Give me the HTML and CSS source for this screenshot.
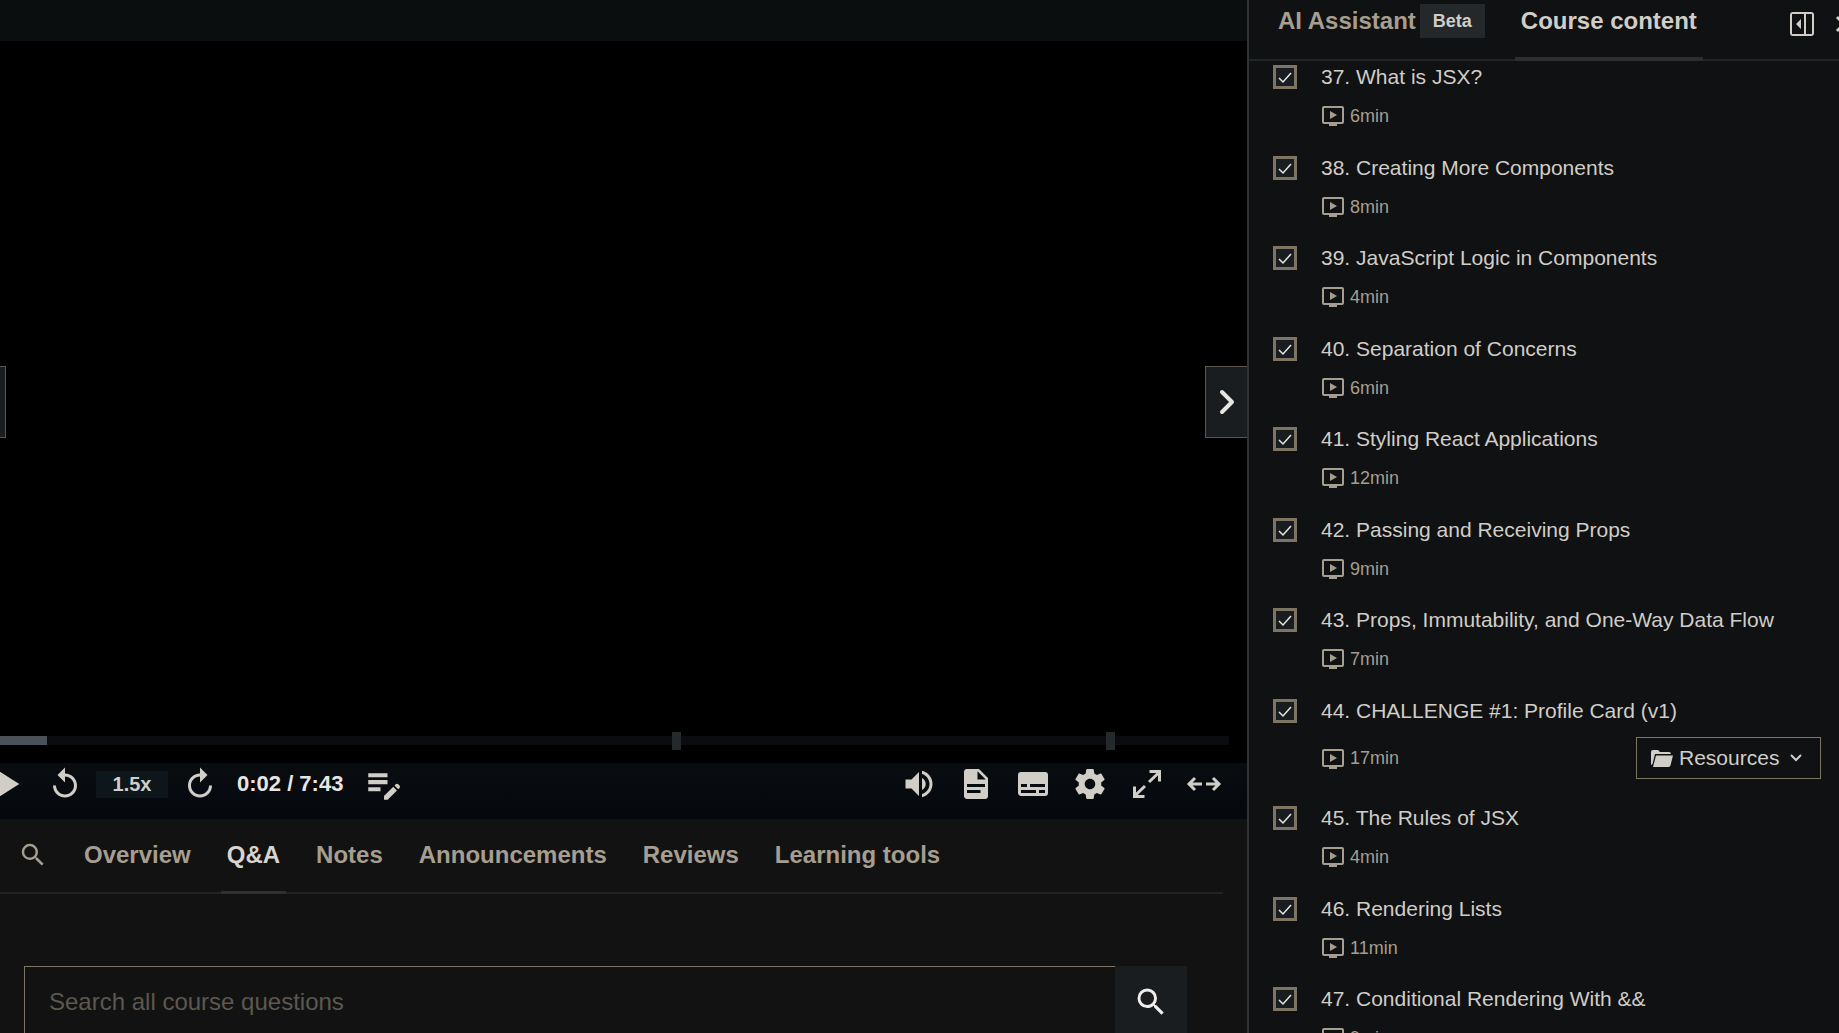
FILE: index.html
```html
<!DOCTYPE html>
<html lang="en">
<head>
<meta charset="utf-8">
<title>Course player</title>
<link rel="stylesheet" href="styles.css">
</head>
<body>
<svg class="sprite" aria-hidden="true">
  <symbol id="i-lecture" viewBox="0 0 22 20"><path fill-rule="evenodd" d="M2 0h18a2 2 0 0 1 2 2v14a2 2 0 0 1-2 2h-5v2H7v-2H2a2 2 0 0 1-2-2V2a2 2 0 0 1 2-2zm0 2v14h18V2zm6 3l7 4-7 4z"/></symbol>
  <symbol id="i-search" viewBox="0 0 24 24"><path d="M15.5 14h-.79l-.28-.27A6.47 6.47 0 0 0 16 9.5 6.5 6.5 0 1 0 9.5 16c1.61 0 3.09-.59 4.23-1.57l.27.28v.79l5 4.99L20.49 19l-4.99-5zm-6 0C7.01 14 5 11.99 5 9.5S7.01 5 9.5 5 14 7.01 14 9.5 11.99 14 9.5 14z"/></symbol>
  <symbol id="i-replay" viewBox="0 0 24 24"><path d="M12 5V1L7 6l5 5V7c3.31 0 6 2.69 6 6s-2.69 6-6 6-6-2.69-6-6H4c0 4.42 3.58 8 8 8s8-3.58 8-8-3.58-8-8-8z"/></symbol>
</svg>
<div class="app">
  <main class="main">
    <div class="topbar"></div>
    <section class="video" aria-label="Video player">
      <button class="side-nav side-nav-prev" aria-label="Previous lecture"></button>
      <button class="side-nav side-nav-next" aria-label="Next lecture">
        <svg class="chevron" viewBox="0 0 16 26"><path d="M3 3l10 10L3 23"/></svg>
      </button>
      <div class="progress">
        <div class="played"></div>
        <span class="marker" style="left:54.7%"></span>
        <span class="marker" style="left:90%"></span>
      </div>
    </section>
    <div class="controls">
      <button class="ctl play" aria-label="Play"><svg class="icon-lg" viewBox="0 0 24 24"><path d="M8 5v14l11-7z"/></svg></button>
      <button class="ctl" aria-label="Rewind"><svg class="icon"><use href="#i-replay"/></svg></button>
      <button class="speed">1.5x</button>
      <button class="ctl" aria-label="Forward"><svg class="icon flip"><use href="#i-replay"/></svg></button>
      <span class="time">0:02 / 7:43</span>
      <button class="ctl" aria-label="Add note"><svg class="icon-lg" viewBox="0 0 24 24"><path d="M3 9.700h11v2.400H3zM3 8.200h11V5.800H3zM3 16.200h7v-2.400H3zM18.010 12.870l.71-.71c.39-.39 1.020-.39 1.410 0l.71.71c.39.39.39 1.020 0 1.410l-.71.71-2.120-2.120zm-.71.71-5.300 5.300V21h2.120l5.300-5.300-2.120-2.120z"/></svg></button>
      <div class="controls-right">
        <button class="ctl" aria-label="Volume"><svg class="icon" viewBox="0 0 24 24"><path d="M3 9v6h4l5 5V4L7 9H3zm11-1v8c1.480-.730 2.500-2.250 2.500-4S15.480 8.740 14 8zM14 3.230v2.060c2.890.860 5 3.540 5 6.710s-2.110 5.850-5 6.710v2.060c4.010-.910 7-4.490 7-8.770s-2.990-7.860-7-8.770z"/></svg></button>
        <button class="ctl" aria-label="Transcript"><svg class="icon" viewBox="0 0 24 24"><path fill-rule="evenodd" d="M14 2H6a2 2 0 0 0-2 2v16c0 1.100.9 2 2 2h12a2 2 0 0 0 2-2V8zm-1 1.500L18.500 9H13zM6 12h12v2H6zm0 4h9v2H6z"/></svg></button>
        <button class="ctl" aria-label="Captions"><svg class="icon" viewBox="0 0 24 24"><path fill-rule="evenodd" d="M20 4H4a2 2 0 0 0-2 2v12c0 1.100.9 2 2 2h16a2 2 0 0 0 2-2V6a2 2 0 0 0-2-2zM4 12h4v2H4zm10 6H4v-2h10zm6 0h-4v-2h4zm0-4H10v-2h10z"/></svg></button>
        <button class="ctl" aria-label="Settings"><svg class="icon" viewBox="0 0 24 24"><path d="M19.430 12.980c.04-.32.07-.64.07-.98s-.03-.66-.07-.98l2.110-1.650c.19-.15.24-.42.12-.64l-2-3.460c-.12-.22-.39-.3-.61-.22l-2.490 1c-.52-.4-1.080-.73-1.690-.98l-.38-2.650A.488.488 0 0 0 14 2h-4c-.25 0-.46.18-.49.42l-.38 2.650c-.61.25-1.170.59-1.690.98l-2.490-1c-.23-.09-.49 0-.61.22l-2 3.460c-.13.22-.07.49.12.64l2.110 1.650c-.04.32-.07.65-.07.98s.03.66.07.98l-2.110 1.650c-.19.15-.24.42-.12.64l2 3.460c.12.22.39.3.61.22l2.490-1c.52.4 1.080.73 1.690.98l.38 2.650c.03.24.24.42.49.42h4c.25 0 .46-.18.49-.42l.38-2.650c.61-.25 1.170-.59 1.690-.98l2.490 1c.23.09.49 0 .61-.22l2-3.460c.12-.22.07-.49-.12-.64zM12 15.500c-1.930 0-3.500-1.570-3.500-3.500s1.570-3.500 3.500-3.500 3.500 1.570 3.500 3.500-1.570 3.500-3.500 3.500z"/></svg></button>
        <button class="ctl" aria-label="Fullscreen"><svg class="icon stroke" viewBox="0 0 36 36"><path d="M20 16L31 5.500M20.500 5.500H30.500V15.500M16 20L5 30.500M5.500 20.500V30.500H15.500"/></svg></button>
        <button class="ctl" aria-label="Expanded view"><svg class="icon stroke" viewBox="0 0 36 36"><path d="M16 18H4M9 12l-6 6 6 6M20 18h12M27 12l6 6-6 6"/></svg></button>
      </div>
    </div>
    <nav class="tabs" aria-label="Course sections">
      <a class="tab tab-search" href="#search" aria-label="Search"><svg class="icon-sm"><use href="#i-search"/></svg></a>
      <a class="tab" href="#overview">Overview</a>
      <a class="tab active" href="#qa">Q&amp;A</a>
      <a class="tab" href="#notes">Notes</a>
      <a class="tab" href="#announcements">Announcements</a>
      <a class="tab" href="#reviews">Reviews</a>
      <a class="tab" href="#tools">Learning tools</a>
    </nav>
    <form class="search">
      <input class="search-input" type="text" placeholder="Search all course questions" aria-label="Search all course questions">
      <button class="search-btn" type="button" aria-label="Search"><svg class="icon"><use href="#i-search"/></svg></button>
    </form>
  </main>
  <aside class="sidebar">
    <header class="side-head">
      <a class="side-tab" href="#assistant">AI Assistant <span class="badge">Beta</span></a>
      <a class="side-tab active" href="#content">Course content</a>
      <div class="side-actions">
        <button class="ctl" aria-label="Dock panel"><svg class="dock" viewBox="0 0 24 24"><path fill-rule="evenodd" d="M3 0h18a3 3 0 0 1 3 3v18a3 3 0 0 1-3 3H3a3 3 0 0 1-3-3V3a3 3 0 0 1 3-3zm-1 2v20h12V2zm14 0v20h6V2zM11 7v10l-5-5z"/></svg></button>
        <button class="ctl" aria-label="Close panel"><svg class="close" viewBox="0 0 18 18"><path d="M2 2l14 14M16 2L2 16"/></svg></button>
      </div>
    </header>
    <ul class="lectures">
      <li class="lecture"><input class="check" type="checkbox" id="l37" checked><label class="title" for="l37">37. What is JSX?</label><div class="meta"><svg class="lec"><use href="#i-lecture"/></svg>6min</div></li>
      <li class="lecture"><input class="check" type="checkbox" id="l38" checked><label class="title" for="l38">38. Creating More Components</label><div class="meta"><svg class="lec"><use href="#i-lecture"/></svg>8min</div></li>
      <li class="lecture"><input class="check" type="checkbox" id="l39" checked><label class="title" for="l39">39. JavaScript Logic in Components</label><div class="meta"><svg class="lec"><use href="#i-lecture"/></svg>4min</div></li>
      <li class="lecture"><input class="check" type="checkbox" id="l40" checked><label class="title" for="l40">40. Separation of Concerns</label><div class="meta"><svg class="lec"><use href="#i-lecture"/></svg>6min</div></li>
      <li class="lecture"><input class="check" type="checkbox" id="l41" checked><label class="title" for="l41">41. Styling React Applications</label><div class="meta"><svg class="lec"><use href="#i-lecture"/></svg>12min</div></li>
      <li class="lecture"><input class="check" type="checkbox" id="l42" checked><label class="title" for="l42">42. Passing and Receiving Props</label><div class="meta"><svg class="lec"><use href="#i-lecture"/></svg>9min</div></li>
      <li class="lecture"><input class="check" type="checkbox" id="l43" checked><label class="title" for="l43">43. Props, Immutability, and One-Way Data Flow</label><div class="meta"><svg class="lec"><use href="#i-lecture"/></svg>7min</div></li>
      <li class="lecture"><input class="check" type="checkbox" id="l44" checked><label class="title" for="l44">44. CHALLENGE #1: Profile Card (v1)</label><div class="meta"><svg class="lec"><use href="#i-lecture"/></svg>17min
        <button class="resources"><svg class="folder" viewBox="0 0 22 17"><path d="M0 15V2a2 2 0 0 1 2-2h5l2 2h9a2 2 0 0 1 2 2v0H4L1.500 14zM5 5.500h17l-2.500 10a2 2 0 0 1-2 1.500H2z"/></svg>Resources<svg class="caret" viewBox="0 0 12 8"><path d="M1 1l5 5 5-5"/></svg></button></div></li>
      <li class="lecture"><input class="check" type="checkbox" id="l45" checked><label class="title" for="l45">45. The Rules of JSX</label><div class="meta"><svg class="lec"><use href="#i-lecture"/></svg>4min</div></li>
      <li class="lecture"><input class="check" type="checkbox" id="l46" checked><label class="title" for="l46">46. Rendering Lists</label><div class="meta"><svg class="lec"><use href="#i-lecture"/></svg>11min</div></li>
      <li class="lecture"><input class="check" type="checkbox" id="l47" checked><label class="title" for="l47">47. Conditional Rendering With &amp;&amp;</label><div class="meta"><svg class="lec"><use href="#i-lecture"/></svg>9min</div></li>
    </ul>
  </aside>
</div>
</body>
</html>
```
FILE: styles.css
```css
* { box-sizing: border-box; }
body {
  margin: 0;
  background: #121212;
  color: #d1cdc7;
  font-family: "Liberation Sans", Arial, sans-serif;
  font-size: 21px;
}
button, input { font: inherit; color: inherit; margin: 0; }
button { border: 0; padding: 0; background: none; cursor: pointer; }
a { color: inherit; text-decoration: none; }
svg { display: block; fill: currentColor; flex: none; }
.sprite { position: absolute; width: 0; height: 0; }

.app { display: flex; height: 100vh; overflow: hidden; }
.main { flex: 1; min-width: 0; display: flex; flex-direction: column; overflow: hidden; }
.main > * { flex: none; }
.topbar { height: 41px; background: #0a0e0f; }

/* Video */
.video {
  position: relative;
  height: 722px;
  background: #000;
  display: flex;
  align-items: flex-end;
  padding: 0 18px 18px 0;
}
.side-nav {
  position: absolute;
  top: 325px;
  height: 72px;
  background: #1a1d20;
  border: 1px solid #5e574b;
  color: #e8e6e3;
}
.side-nav-prev { left: 0; width: 6px; border-left: 0; }
.side-nav-next { right: 0; width: 42px; border-right: 0; display: flex; align-items: center; justify-content: center; }
.chevron { width: 16px; height: 26px; fill: none; stroke: currentColor; stroke-width: 4; stroke-linecap: round; stroke-linejoin: round; }
.progress { position: relative; flex: 1; height: 9px; background: #0a0c10; }
.played { width: 47px; height: 9px; background: #4b5159; }
.marker { position: absolute; top: -4px; width: 9px; height: 18px; background: #24292b; }

/* Player controls */
.controls {
  height: 56px;
  display: flex;
  align-items: flex-start;
  padding: 3px 25px 0 0;
  background: linear-gradient(#0a0d10, #04070c);
}
.ctl { display: flex; align-items: center; justify-content: center; height: 36px; }
.play { margin: 0 19px 0 -14px; }
.icon { width: 36px; height: 36px; }
.icon-lg { width: 42px; height: 42px; }
.icon-sm { width: 30px; height: 30px; }
.flip { transform: scaleX(-1); }
.stroke { fill: none; stroke: currentColor; stroke-width: 3; }
.speed {
  width: 72px;
  height: 27px;
  margin: 5px 14px 0 13px;
  background: #0d161b;
  font-size: 20px;
  font-weight: 700;
}
.time { margin: 0 20px 0 19px; line-height: 36px; font-size: 22px; font-weight: 700; color: #e8e6e3; }
.controls-right { display: flex; gap: 21px; margin-left: auto; }

/* Course tabs */
.tabs {
  display: flex;
  gap: 24px;
  height: 75px;
  margin-right: 24px;
  padding-left: 12px;
  border-bottom: 2px solid #222424;
  color: #a69e90;
  font-size: 24px;
  font-weight: 700;
}
.tab { height: 75px; padding: 0 6px; line-height: 72px; border-bottom: 3px solid transparent; }
.tab-search { display: flex; align-items: center; }
.tab.active { color: #d8d4cf; border-color: #303030; }

/* Question search */
.search { display: flex; height: 72px; margin: 72px 60px 0 24px; }
.search-input {
  flex: 1;
  min-width: 0;
  padding: 0 24px;
  background: #121212;
  border: 1px solid #7d7463;
  border-right: 0;
  border-radius: 0;
  font-size: 24px;
}
.search-input::placeholder { color: #5c5850; opacity: 1; }
.search-btn { width: 72px; display: flex; align-items: center; justify-content: center; background: #1a1d20; color: #f0eeeb; }

/* Sidebar */
.sidebar {
  flex: 0 0 592px;
  min-width: 0;
  overflow: hidden;
  background: #0f1112;
  border-left: 2px solid #2e3335;
}
.side-head {
  display: flex;
  height: 61px;
  padding-left: 23px;
  border-bottom: 2px solid #202627;
  font-size: 24px;
  font-weight: 700;
}
.side-tab { display: flex; height: 61px; padding: 0 6px; line-height: 42px; color: #a69e90; border-bottom: 4px solid transparent; white-space: nowrap; }
.side-tab.active { margin-left: 24px; color: #d1cdc7; border-color: #2e2e30; }
.badge { height: 34px; margin: 4px 0 0 4px; padding: 0 13px; background: #24282a; color: #d1cdc7; font-size: 18px; line-height: 34px; }
.side-actions { display: flex; gap: 21px; margin-left: auto; padding-top: 6px; margin-right: -14px; }
.dock { width: 24px; height: 24px; }
.close { width: 18px; height: 18px; fill: none; stroke: currentColor; stroke-width: 3; }

.lectures { list-style: none; margin: 0; padding: 0 18px 0 24px; }
.lecture {
  display: grid;
  grid-template-columns: 24px 1fr;
  column-gap: 24px;
  align-items: center;
  padding-bottom: 18px;
}
.lecture:nth-child(odd) { padding-bottom: 19px; }
.check {
  appearance: none;
  width: 24px;
  height: 24px;
  border: 3px solid #7d7463;
  background: #1a1d20 url("data:image/svg+xml,%3Csvg xmlns='http://www.w3.org/2000/svg' viewBox='0 0 18 18'%3E%3Cpath d='M3 10l4 4L15 5' fill='none' stroke='%23e8e6e3' stroke-width='1.5'/%3E%3C/svg%3E");
}
.title { line-height: 32px; }
.meta { grid-column: 2; display: flex; align-items: center; gap: 6px; min-height: 40px; padding-top: 6px; font-size: 18px; color: #a69e90; }
.lec { width: 22px; height: 20px; margin-left: 1px; }
.resources {
  display: flex;
  align-items: center;
  height: 42px;
  width: 185px;
  margin: 4px 0 5px auto;
  padding: 0 14px;
  border: 1px solid #7d7463;
  color: #d1cdc7;
  font-size: 21px;
}
.folder { width: 22px; height: 17px; margin-right: 6px; }
.caret { width: 12px; height: 8px; margin-left: 11px; fill: none; stroke: currentColor; stroke-width: 2; }
```
